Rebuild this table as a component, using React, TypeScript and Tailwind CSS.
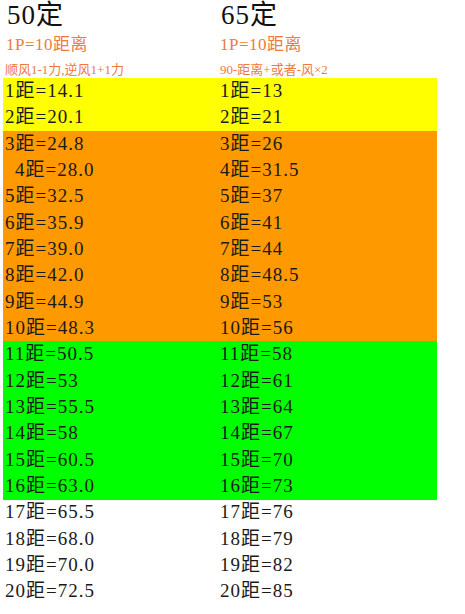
import React from 'react';

type Row = { a: string; b: string; bg: string; indent?: boolean };

const rows: Row[] = [
  { a: '1距=14.1', b: '1距=13', bg: 'bg-[#ffff00]' },
  { a: '2距=20.1', b: '2距=21', bg: 'bg-[#ffff00]' },
  { a: '3距=24.8', b: '3距=26', bg: 'bg-[#ff9900]' },
  { a: '4距=28.0', b: '4距=31.5', bg: 'bg-[#ff9900]', indent: true },
  { a: '5距=32.5', b: '5距=37', bg: 'bg-[#ff9900]' },
  { a: '6距=35.9', b: '6距=41', bg: 'bg-[#ff9900]' },
  { a: '7距=39.0', b: '7距=44', bg: 'bg-[#ff9900]' },
  { a: '8距=42.0', b: '8距=48.5', bg: 'bg-[#ff9900]' },
  { a: '9距=44.9', b: '9距=53', bg: 'bg-[#ff9900]' },
  { a: '10距=48.3', b: '10距=56', bg: 'bg-[#ff9900]' },
  { a: '11距=50.5', b: '11距=58', bg: 'bg-[#00ff00]' },
  { a: '12距=53', b: '12距=61', bg: 'bg-[#00ff00]' },
  { a: '13距=55.5', b: '13距=64', bg: 'bg-[#00ff00]' },
  { a: '14距=58', b: '14距=67', bg: 'bg-[#00ff00]' },
  { a: '15距=60.5', b: '15距=70', bg: 'bg-[#00ff00]' },
  { a: '16距=63.0', b: '16距=73', bg: 'bg-[#00ff00]' },
  { a: '17距=65.5', b: '17距=76', bg: 'bg-white' },
  { a: '18距=68.0', b: '18距=79', bg: 'bg-white' },
  { a: '19距=70.0', b: '19距=82', bg: 'bg-white' },
  { a: '20距=72.5', b: '20距=85', bg: 'bg-white' },
];

export default function App() {
  return (
    <div className="w-[465px] h-[614px] bg-white text-[#1a1a1a] font-['Liberation_Serif','Noto_Sans_CJK_SC',serif] overflow-hidden">
      <div className="pl-[3px] w-[437px]">
        {/* headers */}
        <div className="flex h-[31px] items-center text-[27px] tracking-[1px] text-[#111]">
          <div className="w-[217px] pl-[4px]">50定</div>
          <div className="pl-[1px]">65定</div>
        </div>
        <div className="flex h-[27px] items-center text-[17px] tracking-[0.5px] text-[#f07a3a]">
          <div className="w-[217px] pl-[3px]">1P=10距离</div>
          <div>1P=10距离</div>
        </div>
        <div className="flex h-[20px] items-center pt-[3px] text-[13px] text-[#f07a3a]">
          <div className="w-[217px] pl-[2px]">顺风1-1力,逆风1+1力</div>
          <div>90-距离+或者-风×2</div>
        </div>

        {rows.map((r) => (
          <div key={r.a} className={`flex h-[26.35px] items-center text-[19px] tracking-[1px] ${r.bg}`}>
            <div className={`w-[217px] ${r.indent ? 'pl-[12px]' : 'pl-[2px]'}`}>{r.a}</div>
            <div>{r.b}</div>
          </div>
        ))}
      </div>
    </div>
  );
}
